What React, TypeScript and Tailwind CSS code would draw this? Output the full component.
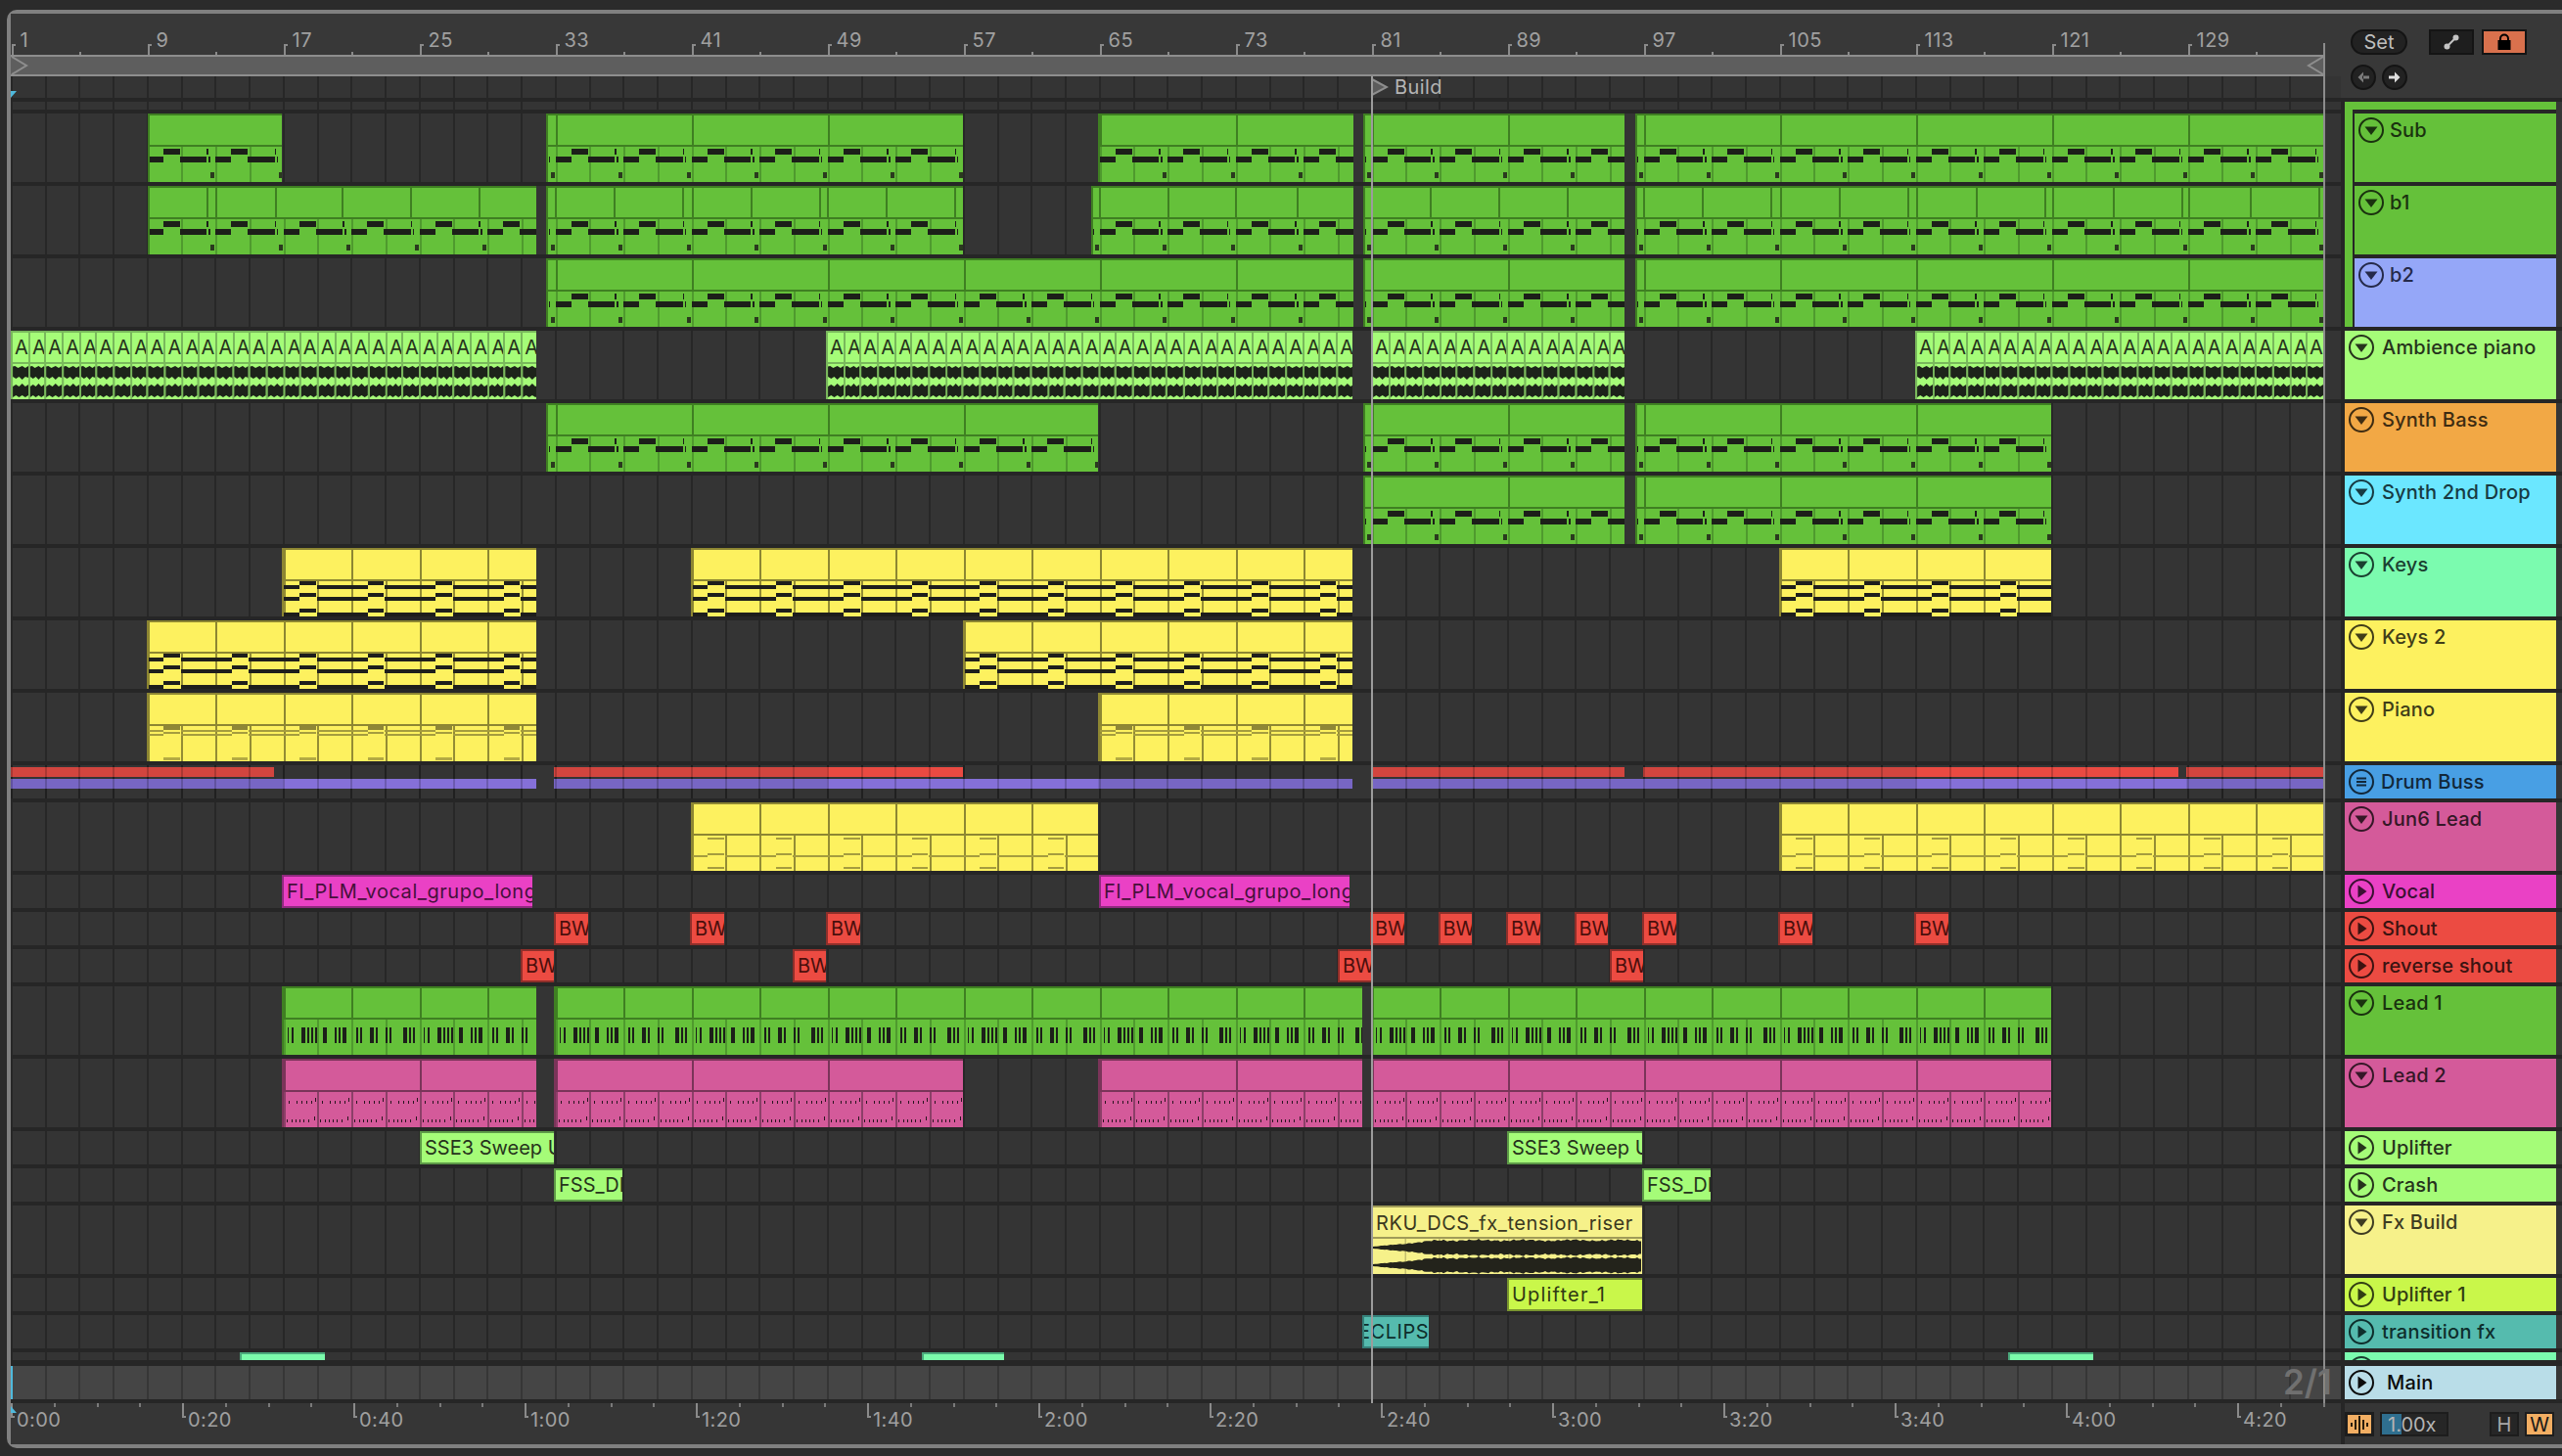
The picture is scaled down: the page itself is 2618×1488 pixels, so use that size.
import type { ReactNode } from "react";

// timeline maths, in page pixels
const BAR = 17.375;
const ORIGIN = 11;
const START = 11.6;
const barX = (bar: number) => START + (bar - 1) * BAR;

type Seg = [number, number, number, number, string?]; // from, to, y, height, colour

const BASS: Seg[] = [
  [0, 16, 44, 6], [16, 33, 36, 6], [33, 60.5, 44, 6], [60.5, 62, 36, 6], [62.5, 64, 44, 6], [64.5, 68.5, 60, 6, "#2a3a1e"],
];
const KEYS: Seg[] = [
  [0, 16.5, 38, 4], [34, 69.5, 38, 4], [16.5, 33, 34, 4],
  [0, 16.5, 50, 4], [34, 69.5, 50, 4], [16.5, 33, 46, 4],
  [0, 16.5, 66, 4], [34, 69.5, 66, 4], [16.5, 33, 62, 4],
];
const PIANO: Seg[] = [
  [16.5, 33, 34, 4, "#8f8736"], [0, 16.5, 38, 2, "#a59c3e"], [34, 69.5, 38, 2, "#a59c3e"], [16.5, 33, 40, 2, "#a59c3e"],
  [0, 16.5, 42, 2, "#a59c3e"], [34, 69.5, 42, 2, "#a59c3e"], [16.5, 33, 66, 3, "#b3aa42"],
];
const JUN: Seg[] = [
  [16.5, 33, 36, 2, "#a59c3e"], [0, 16.5, 54, 2, "#a59c3e"], [34, 69.5, 54, 2, "#a59c3e"], [16.5, 33, 52, 2, "#a59c3e"], [16.5, 33, 66, 2, "#a59c3e"],
];
const LEAD_BARS: [number, number][] = [
  [4, 1.5], [8, 2], [18, 4], [24, 2], [28, 2], [32, 2], [40, 4], [52, 2], [56, 2], [60, 4],
  [74, 2], [78, 2], [88, 4], [94, 2], [104, 2], [108, 2], [122, 4], [128, 2], [132, 2],
];
const LEAD: Seg[] = LEAD_BARS.map(([x, w]) => [x, x + w, 42, 16]);
const PERIODS = { bass: 69.5, keys: 69.5, piano: 69.5, jun: 69.5, lead: 139, dots: 34.75 };
const DOTS: Seg[] = [
  [5, 6, 43, 3], [13, 14, 43, 3], [18, 19, 43, 3], [23, 24, 43, 3], [28, 29, 43, 3], [32, 33, 40, 4],
  [3, 4, 62, 3], [8, 9, 62, 3], [12, 13, 62, 3], [16, 17, 62, 3], [20, 21, 62, 3], [25, 26, 62, 3], [31, 32, 59, 4],
];
const NOTES = { bass: BASS, keys: KEYS, piano: PIANO, jun: JUN, lead: LEAD, dots: DOTS };

const THEMES = {
  green: { fill: "bg-[#65c13a]", line: "#3f7f22", tint: "#4f9a2e", note: "#1c1f19" },
  yellow: { fill: "bg-[#fdf15f]", line: "#8d8632", tint: "#948c34", note: "#1e1e1c" },
  pink: { fill: "bg-[#d45a9a]", line: "#7a3459", tint: "#8c3f68", note: "#2a1520" },
};

type Kind = keyof typeof NOTES;
type Theme = keyof typeof THEMES;
type Span = [number, number, number[]?];

function MidiClip({ span, kind, theme, period }: { span: Span; kind: Kind; theme: Theme; period: number }) {
  const [x, end, custom] = span;
  const w = end - x;
  const t = THEMES[theme];
  const marks: number[] = custom ? [...custom] : [];
  if (!custom) for (let m = START; m < end; m += period) if (m > x) marks.push(m);
  const lines: number[] = [];
  for (let m = START; m < end; m += 34.75) if (m > x) lines.push(m);
  const step = PERIODS[kind];
  const rects: ReactNode[] = [];
  for (let base = START + Math.floor((x - START) / step) * step - step; base < end; base += step) {
    NOTES[kind].forEach((s, i) => {
      rects.push(<rect key={`${base}-${i}`} x={base + s[0]} y={s[2]} width={s[1] - s[0]} height={s[3]} fill={s[4] ?? t.note} />);
    });
  }
  return (
    <div className={`absolute top-0 h-full ${t.fill}`} style={{ left: x - ORIGIN, width: w }}>
      <svg className="block" width={w} height={70} viewBox={`${x} 0 ${w} 70`} shapeRendering="crispEdges">
        {lines.map((m) => <rect key={m} x={m} y={34} width={2} height={36} fill={t.tint} />)}
        {rects}
        {marks.map((m) => <rect key={m} x={m} y={0} width={2} height={34} fill={t.line} />)}
        <rect x={x} y={0} width={w} height={2} fill={t.line} />
        <rect x={x} y={32} width={w} height={2} fill={t.line} />
        <rect x={x} y={0} width={2} height={70} fill={t.line} />
      </svg>
    </div>
  );
}

function AmbienceClip({ x, end }: { x: number; end: number }) {
  const cells: { at: number; w: number }[] = [];
  for (let at = x, i = 0; at < end; i++) {
    const w = i % 3 === 1 ? 16.125 : 18;
    cells.push({ at, w });
    at += w;
  }
  return (
    <div className="absolute top-0 h-full overflow-hidden bg-[#a5fc78]" style={{ left: x - ORIGIN, width: end - x }}>
      <div className="flex h-[32px] border-t-2 border-[#79b85c]">
        {cells.map((c) => (
          <div key={c.at} className="flex shrink-0 items-center overflow-hidden border-l-2 border-[#79b85c] pl-[2px] text-[20px] leading-none text-[#26331c]" style={{ width: c.w }}>
            A
          </div>
        ))}
      </div>
      <svg className="absolute left-0 top-0" width={end - x} height={70} viewBox={`${x} 0 ${end - x} 70`}>
        <rect x={x} y={32} width={end - x} height={2} fill="#79b85c" />
        {cells.map((c) => (
          <g key={c.at} transform={`translate(${c.at} 0) scale(${c.w / 17} 1)`}>
            <path d="M0 37L4 36L7 38L11 36L14 38L17 36L17 48L14 47L11 50L8 47L5 49L2 47L0 49Z" fill="#1d231a" />
            <path d="M0 55L2 57L5 55L8 57L11 54L14 57L17 55L17 66L14 68L11 66L8 68L5 66L2 68L0 66Z" fill="#1d231a" />
            <rect x={0} y={32} width={2} height={38} fill="#79b85c" />
          </g>
        ))}
      </svg>
    </div>
  );
}

function LabelClip({ x, end, text, cls }: { x: number; end: number; text: string; cls: string }) {
  return (
    <div className={`absolute top-0 flex h-full items-center overflow-hidden whitespace-nowrap border-y-2 border-l-2 pl-[3px] text-[20px] leading-none ${cls}`} style={{ left: x - ORIGIN, width: end - x }}>
      {text}
    </div>
  );
}

function FxClip() {
  const x = 1401;
  const w = 277;
  const up: string[] = [];
  const down: string[] = [];
  for (let i = 0; i <= w; i += 2) {
    const grow = Math.min(1, 0.1 + i / 78);
    const noise = Math.sin(i * 0.7) * 0.6 + Math.sin(i * 1.9) * 0.4 + Math.sin(i * 0.13) * 0.5;
    const a = 7.4 * grow + noise * grow;
    up.push(`${x + i} ${(43 - a).toFixed(1)}`);
    down.unshift(`${x + i} ${(43 + a).toFixed(1)}`);
  }
  const wave = `M${up.join("L")}L${down.join("L")}Z`;
  return (
    <div className="absolute top-0 h-full bg-[#f6f18a]" style={{ left: x - ORIGIN, width: w }}>
      <div className="flex h-[33px] items-center whitespace-nowrap border-t-2 border-[#a09b58] pl-[5px] text-[20px] leading-none tracking-[0.55px] text-[#3a3820]">
        RKU_DCS_fx_tension_riser
      </div>
      <svg className="absolute left-0 top-0" width={w} height={70} viewBox={`${x} 0 ${w} 70`}>
        <rect x={x} y={32} width={w} height={2} fill="#a09b58" />
        {[1435.5, 1470.2, 1541, 1610, 1645].map((m) => <rect key={m} x={m} y={34} width={1.5} height={36} fill="#c4bf6e" />)}
        <path d={wave} fill="#23231b" />
        <path d={wave} transform="translate(0 18)" fill="#23231b" />
      </svg>
    </div>
  );
}

const Grid = "bg-[#343434] bg-[repeating-linear-gradient(90deg,#272727_0,#272727_2px,transparent_2px,transparent_34.75px)]";

function Row({ h, children }: { h: string; children?: ReactNode }) {
  return <div className={`relative overflow-hidden ${h} ${Grid}`}>{children}</div>;
}

function Midi({ spans, kind, theme, period = 139 }: { spans: Span[]; kind: Kind; theme: Theme; period?: number }) {
  return (
    <Row h="h-[70px]">
      {spans.map((s) => <MidiClip key={s[0]} span={s} kind={kind} theme={theme} period={period} />)}
    </Row>
  );
}

const VOCAL = "border-[#8f2a7e] bg-[#ea41c5] text-[#46103b] tracking-[0.55px]";
const SHOUT = "border-[#8f2f2a] bg-[#ec4b42] text-[#4a0f0c]";
const SWEEP = "border-[#5d9a47] bg-[#a5fc78] text-[#26331c]";
const LIME = "border-[#7b9630] bg-[#c9f74a] text-[#2f3814] tracking-[1.2px]";

function DrumBuss() {
  const seg = "absolute";
  return (
    <Row h="h-[34px]">
      {[[11, 280, "bg-[#d2453f]"], [566, 845, "bg-[#d2453f]"], [845, 984, "bg-[#ea4a42]"], [1401, 1660, "bg-[#d2453f]"], [1679, 1957, "bg-[#d2453f]"], [1957, 2226, "bg-[#ea4a42]"], [2234, 2374, "bg-[#d2453f]"]].map(([a, b, c]) => (
        <div key={a as number} className={`${seg} top-[2px] h-[10px] ${c}`} style={{ left: (a as number) - ORIGIN, width: (b as number) - (a as number) }} />
      ))}
      {[[11, 289, "bg-[#7766c4]"], [289, 548, "bg-[#8570d8]"], [566, 845, "bg-[#7766c4]"], [845, 1122, "bg-[#8570d8]"], [1122, 1382, "bg-[#7766c4]"], [1401, 1957, "bg-[#7766c4]"], [1957, 2234, "bg-[#8570d8]"], [2234, 2374, "bg-[#7766c4]"]].map(([a, b, c]) => (
        <div key={a as number} className={`${seg} top-[14px] h-[10px] ${c}`} style={{ left: (a as number) - ORIGIN, width: (b as number) - (a as number) }} />
      ))}
      <div className="absolute inset-0 bg-[repeating-linear-gradient(90deg,#00000030_0,#00000030_2px,transparent_2px,transparent_34.75px)]" />
    </Row>
  );
}

function Arrangement() {
  const b1a = [211, 220, 281, 349, 419, 489];
  const b1b = [567, 627, 697, 707, 767, 837, 845, 905, 975];
  const b1c = [1123, 1193, 1262, 1325];
  const b1d = [1401, 1461, 1531, 1601];
  const b1e = [1679, 1739, 1809, 1819, 1879, 1949, 1958, 2019, 2089, 2097, 2159, 2229, 2236, 2299, 2369];
  const shout = [33, 41, 49, 81, 85, 89, 93, 97, 105, 113];
  const reverse = [532, 810, 1367, 1645];
  const bars: number[] = [];
  for (let b = 1; b <= 129; b += 8) bars.push(b);
  return (
    <div className="flex w-[2381px] shrink-0 flex-col gap-[4px]">
      <div className="flex h-[86px] flex-col bg-[#383838]">
        <div className="relative h-[42px] text-[20px] leading-none tracking-[0.4px] text-[#a0a0a0]">
          {bars.map((b) => (
            <div key={b} className="absolute bottom-0" style={{ left: barX(b) - ORIGIN }}>
              <div className="h-[11px] w-[4px] border-l-2 border-t-2 border-[#8a8a8a]" />
              <span className="absolute bottom-[5px] left-[9px]">{b}</span>
              <div className="absolute bottom-0 left-[69.5px] h-[3px] w-[2px] bg-[#8a8a8a]" />
            </div>
          ))}
        </div>
        <div className="relative h-[22px] w-[2364px] border-y-2 border-[#8e8e8e] bg-[#5e5e5e]">
          <svg className="absolute left-0 top-0" width="18" height="18" viewBox="0 0 18 18">
            <path d="M1 0L16 9L1 18" fill="none" stroke="#8e8e8e" strokeWidth="2" />
          </svg>
          <svg className="absolute right-0 top-0" width="18" height="18" viewBox="0 0 18 18">
            <path d="M17 0L2 9L17 18" fill="none" stroke="#8e8e8e" strokeWidth="2" />
          </svg>
        </div>
        <div className={`relative h-[22px] ${Grid}`}>
          <svg className="absolute left-[1390px] top-[2px]" width="18" height="18" viewBox="0 0 18 18">
            <path d="M1 1L16 9L1 17Z" fill="#5b5b5b" stroke="#8e8e8e" strokeWidth="2" />
          </svg>
          <span className="absolute left-[1414px] top-0 flex h-full items-center text-[20px] leading-none tracking-[0.4px] text-[#b4b4b4]">Build</span>
          <div className="absolute left-0 top-[15px] h-0 w-0 border-r-[6px] border-t-[7px] border-r-transparent border-t-[#4fb9dc]" />
        </div>
      </div>
      <Row h="h-[8px]" />
      <Midi kind="bass" theme="green" spans={[[151, 288], [558, 984], [1122, 1383], [1393, 1660], [1671, 2374]]} />
      <Midi kind="bass" theme="green" spans={[[151, 548, b1a], [558, 984, b1b], [1115, 1383, b1c], [1393, 1660, b1d], [1671, 2374, b1e]]} />
      <Midi kind="bass" theme="green" spans={[[558, 1383], [1393, 1660], [1671, 2374]]} />
      <Row h="h-[70px]">
        {[[11, 548], [844, 1382], [1401, 1660], [1957, 2374]].map(([x, end]) => <AmbienceClip key={x} x={x} end={end} />)}
      </Row>
      <Midi kind="bass" theme="green" spans={[[558, 1122], [1393, 1660], [1671, 2096]]} />
      <Midi kind="bass" theme="green" spans={[[1393, 1660], [1671, 2096]]} />
      <Midi kind="keys" theme="yellow" period={69.5} spans={[[288, 548], [706, 1382], [1818, 2096]]} />
      <Midi kind="keys" theme="yellow" period={69.5} spans={[[150, 548], [984, 1382]]} />
      <Midi kind="piano" theme="yellow" period={69.5} spans={[[150, 548], [1122, 1382]]} />
      <DrumBuss />
      <Midi kind="jun" theme="yellow" period={69.5} spans={[[706, 1122], [1818, 2374]]} />
      <Row h="h-[34px]">
        <LabelClip x={288} end={544} text="FI_PLM_vocal_grupo_long" cls={VOCAL} />
        <LabelClip x={1123} end={1379} text="FI_PLM_vocal_grupo_long" cls={VOCAL} />
      </Row>
      <Row h="h-[34px]">
        {shout.map((b) => <LabelClip key={b} x={barX(b) - 1.6} end={barX(b) + 33} text="BW" cls={SHOUT} />)}
      </Row>
      <Row h="h-[34px]">
        {reverse.map((x) => <LabelClip key={x} x={x} end={x + 34} text="BW" cls={SHOUT} />)}
      </Row>
      <Midi kind="lead" theme="green" period={69.5} spans={[[288, 548], [566, 1392], [1401, 2096]]} />
      <Midi kind="dots" theme="pink" spans={[[288, 548], [566, 984], [1122, 1392], [1401, 2096]]} />
      <Row h="h-[34px]">
        <LabelClip x={429} end={566} text="SSE3 Sweep Up" cls={SWEEP} />
        <LabelClip x={1540} end={1678} text="SSE3 Sweep Up" cls={SWEEP} />
      </Row>
      <Row h="h-[34px]">
        <LabelClip x={566} end={636} text="FSS_DL" cls={SWEEP} />
        <LabelClip x={1678} end={1748} text="FSS_DL" cls={SWEEP} />
      </Row>
      <Row h="h-[70px]"><FxClip /></Row>
      <Row h="h-[34px]"><LabelClip x={1540} end={1678} text="Uplifter_1" cls={LIME} /></Row>
      <Row h="h-[34px]">
        <div className="absolute top-0 flex h-full items-center overflow-hidden whitespace-nowrap border-y-2 border-l-2 border-[#35807a] bg-[#55bbae] text-[20px] leading-none tracking-[0.55px] text-[#0e2e2c]" style={{ left: 1392 - ORIGIN, width: 68 }}>
          <span className="ml-[-6px]">ECLIPSE</span>
        </div>
      </Row>
      <Row h="h-[8px]">
        {[[245, 332], [942, 1026], [2052, 2139]].map(([x, end]) => (
          <div key={x} className="absolute top-0 h-full border-l-2 border-t-2 border-[#4ba97c] bg-[#7bfbab]" style={{ left: x - ORIGIN, width: end - x }} />
        ))}
      </Row>
      <div className="relative mt-[2px] h-[34px] bg-[#454545] bg-[repeating-linear-gradient(90deg,#363636_0,#363636_2px,transparent_2px,transparent_34.75px)]">
        <div className="absolute left-0 top-0 h-full w-[2px] bg-[#4fb9dc]" />
      </div>
      <TimeRuler />
    </div>
  );
}

function TimeRuler() {
  const labels = ["0:00", "0:20", "0:40", "1:00", "1:20", "1:40", "2:00", "2:20", "2:40", "3:00", "3:20", "3:40", "4:00", "4:20"];
  const minors: number[] = [];
  for (let i = 1; i < 55; i++) if (i % 4) minors.push(i * 43.75);
  return (
    <div className="relative h-[42px] bg-[#363636] text-[20px] leading-none tracking-[0.4px] text-[#a0a0a0]">
      {minors.map((m) => <div key={m} className="absolute top-0 h-[4px] w-[2px] bg-[#7a7a7a]" style={{ left: m }} />)}
      {labels.map((l, i) => (
        <div key={l} className="absolute top-0" style={{ left: i * 175 }}>
          <div className="h-[15px] w-[4px] border-b-2 border-l-2 border-[#8a8a8a]" />
          <span className="absolute left-[6px] top-[7px]">{l}</span>
        </div>
      ))}
      <div className="absolute left-0 top-[3px] h-0 w-0 border-b-[7px] border-r-[6px] border-b-[#4fb9dc] border-r-transparent" />
    </div>
  );
}

type Icon = "down" | "play" | "list";

function TrackButton({ icon, color }: { icon: Icon; color: string }) {
  return (
    <svg className="shrink-0" width="26" height="26" viewBox="0 0 26 26" style={{ color }}>
      <circle cx="13" cy="13" r="12" fill="none" stroke="currentColor" strokeWidth="2" />
      {icon === "down" && <path d="M6.5 9.5H19.5L13 18Z" fill="currentColor" />}
      {icon === "play" && <path d="M9.5 6.5V19.5L18.5 13Z" fill="currentColor" />}
      {icon === "list" && <path d="M8 8.5H18V10.5H8ZM8 12H18V14H8ZM8 15.5H18V17.5H8Z" fill="currentColor" />}
    </svg>
  );
}

type Head = { name: string; bg: string; ink: string; icon: Icon; h: string; gap?: string };

const TOP_HEADS: Head[] = [
  { name: "Ambience piano", bg: "bg-[#a5fc78]", ink: "#26331c", icon: "down", h: "h-[70px]" },
  { name: "Synth Bass", bg: "bg-[#f2a845]", ink: "#3e2c12", icon: "down", h: "h-[70px]" },
  { name: "Synth 2nd Drop", bg: "bg-[#6be7ff]", ink: "#173a42", icon: "down", h: "h-[70px]" },
  { name: "Keys", bg: "bg-[#7bfbaf]", ink: "#1a4030", icon: "down", h: "h-[70px]" },
  { name: "Keys 2", bg: "bg-[#fdf15f]", ink: "#403d18", icon: "down", h: "h-[70px]" },
  { name: "Piano", bg: "bg-[#fdf15f]", ink: "#403d18", icon: "down", h: "h-[70px]" },
  { name: "Drum Buss", bg: "bg-[#489fe4]", ink: "#12283a", icon: "list", h: "h-[34px]", gap: "ml-[7px]" },
  { name: "Jun6 Lead", bg: "bg-[#d45a9a]", ink: "#351727", icon: "down", h: "h-[70px]" },
  { name: "Vocal", bg: "bg-[#ea41c5]", ink: "#3b1032", icon: "play", h: "h-[34px]" },
  { name: "Shout", bg: "bg-[#ec4b42]", ink: "#3b1311", icon: "play", h: "h-[34px]" },
  { name: "reverse shout", bg: "bg-[#ec4b42]", ink: "#3b1311", icon: "play", h: "h-[34px]" },
  { name: "Lead 1", bg: "bg-[#65c13a]", ink: "#1a310f", icon: "down", h: "h-[70px]" },
  { name: "Lead 2", bg: "bg-[#d45a9a]", ink: "#351727", icon: "down", h: "h-[70px]" },
  { name: "Uplifter", bg: "bg-[#a5fc78]", ink: "#26331c", icon: "play", h: "h-[34px]" },
  { name: "Crash", bg: "bg-[#a5fc78]", ink: "#26331c", icon: "play", h: "h-[34px]" },
  { name: "Fx Build", bg: "bg-[#f6f18a]", ink: "#3e3c22", icon: "down", h: "h-[70px]" },
  { name: "Uplifter 1", bg: "bg-[#c9f74a]", ink: "#323e13", icon: "play", h: "h-[34px]" },
  { name: "transition fx", bg: "bg-[#55bbae]", ink: "#0e2e2c", icon: "play", h: "h-[34px]" },
];

const GROUPED: Head[] = [
  { name: "Sub", bg: "bg-[#65c13a]", ink: "#1a310f", icon: "down", h: "h-[70px]", gap: "ml-[6px]" },
  { name: "b1", bg: "bg-[#65c13a]", ink: "#1a310f", icon: "down", h: "h-[70px]", gap: "ml-[6px]" },
  { name: "b2", bg: "bg-[#95a7f8]", ink: "#252a4a", icon: "down", h: "h-[70px]", gap: "ml-[6px]" },
];

function TrackHead({ head }: { head: Head }) {
  return (
    <div className={`${head.h} ${head.bg}`}>
      <div className="flex h-[34px] items-center pl-[4px]">
        <TrackButton icon={head.icon} color={head.ink} />
        <span className={`${head.gap ?? "ml-[8px]"} whitespace-nowrap text-[20px] font-medium leading-none tracking-[0.2px]`} style={{ color: head.ink }}>
          {head.name}
        </span>
      </div>
    </div>
  );
}

function TopControls() {
  return (
    <div className="flex h-[86px] flex-col gap-[10px] bg-[#383838] pl-[10px] pt-[16px]">
      <div className="flex h-[26px] items-center">
        <div className="flex h-[26px] w-[58px] items-center justify-center rounded-full border-2 border-[#141414] bg-[#222222] text-[20px] leading-none text-[#bdbdbd]">Set</div>
        <div className="ml-[22px] flex h-[26px] w-[46px] items-center justify-center border-2 border-[#141414] bg-[#1e1e1e]">
          <svg width="16" height="16" viewBox="0 0 16 16">
            <path d="M4 12L12 4" stroke="#c4c4c4" strokeWidth="2" />
            <circle cx="3.5" cy="12.5" r="3" fill="#c4c4c4" />
            <circle cx="12.5" cy="3.5" r="3" fill="#c4c4c4" />
          </svg>
        </div>
        <div className="ml-[8px] flex h-[26px] w-[46px] items-center justify-center border-2 border-[#141414] bg-[#d9714d]">
          <svg width="16" height="18" viewBox="0 0 16 18">
            <path d="M4 8V5.5a4 4 0 0 1 8 0V8" fill="none" stroke="#000" strokeWidth="2" />
            <rect x="1.5" y="7" width="13" height="10" fill="#000" />
          </svg>
        </div>
      </div>
      <div className="flex gap-[6px]">
        <div className="flex h-[26px] w-[26px] items-center justify-center rounded-full border-2 border-[#141414] bg-[#222222]">
          <svg width="14" height="14" viewBox="0 0 14 14"><path d="M7 1.5L1.5 7L7 12.5ZM6 5.5H13V8.5H6Z" fill="#7b7b7b" /></svg>
        </div>
        <div className="flex h-[26px] w-[26px] items-center justify-center rounded-full border-2 border-[#141414] bg-[#222222]">
          <svg width="14" height="14" viewBox="0 0 14 14"><path d="M7 1.5L12.5 7L7 12.5ZM1 5.5H8V8.5H1Z" fill="#dedede" /></svg>
        </div>
      </div>
    </div>
  );
}

function BottomControls() {
  return (
    <div className="flex h-[42px] items-start bg-[#363636] pt-[9px]">
      <div className="flex h-[25px] w-[30px] items-center justify-center border-[3px] border-[#1d1d1d] bg-[#f2ae63]">
        <svg width="20" height="18" viewBox="0 0 20 18">
          <path d="M1 7H3V11H1ZM5 4H7V14H5ZM9 0H11V18H9ZM13 4H15V14H13ZM17 7H19V11H17Z" fill="#2a1d0c" />
        </svg>
      </div>
      <div className="relative ml-[6px] flex h-[25px] w-[70px] items-center border-2 border-[#1d1d1d] bg-[#262626] pl-[6px] text-[20px] leading-none text-[#b4b4b4]">
        <div className="absolute bottom-0 left-0 top-0 w-[20px] bg-[#2f6f8f]" />
        <span className="relative">1.00x</span>
      </div>
      <div className="ml-[42px] flex h-[25px] w-[30px] items-center justify-center border-2 border-[#1d1d1d] bg-[#262626] text-[20px] leading-none text-[#a8a8a8]">H</div>
      <div className="ml-[6px] flex h-[25px] w-[30px] items-center justify-center border-2 border-[#1d1d1d] bg-[#f2ae63] text-[20px] leading-none text-[#161616]">W</div>
    </div>
  );
}

function Headers() {
  const Wrap = ({ children }: { children: ReactNode }) => <div className="bg-[#363636]"><div className="w-[216px]">{children}</div></div>;
  return (
    <div className="flex w-[226px] shrink-0 flex-col gap-[4px] pl-[4px]">
      <div className="ml-[-4px] w-[230px]"><TopControls /></div>
      <Wrap>
        <div className="bg-[#65c13a] pt-[8px]">
          <div className="ml-[8px] flex flex-col gap-[4px] bg-[#262626] pl-[2px] pt-[4px]">
            {GROUPED.map((h) => <TrackHead key={h.name} head={h} />)}
          </div>
        </div>
      </Wrap>
      {TOP_HEADS.map((h) => <Wrap key={h.name}><TrackHead head={h} /></Wrap>)}
      <Wrap>
        <div className="h-[8px] overflow-hidden bg-[#7bfbaf]">
          <div className="ml-[4px] mt-[4px]"><TrackButton icon="play" color="#1a4030" /></div>
        </div>
      </Wrap>
      <div className="mt-[2px]">
        <Wrap>
          <div className="flex h-[34px] items-center bg-[#b9dde8] pl-[4px]">
            <TrackButton icon="play" color="#0c0c0c" />
            <span className="ml-[13px] text-[20px] font-medium leading-none tracking-[0.2px] text-[#0c0c0c]">Main</span>
          </div>
        </Wrap>
      </div>
      <BottomControls />
    </div>
  );
}

export default function App() {
  return (
    <div className="h-[1488px] w-[2618px] overflow-hidden bg-[#2b2b2b] pl-[7px] pt-[10px] font-['Inter','Liberation_Sans',sans-serif]">
      <div className="relative flex h-[1470px] w-[2620px] rounded-l-[10px] border-y-4 border-l-4 border-[#808080] bg-[#262626]">
        <Arrangement />
        <Headers />
        <div className="absolute left-[1390px] top-[64px] h-[1356px] w-[2px] bg-[#9c9c9c]" />
        <div className="absolute left-[2363px] top-[30px] h-[1390px] w-[2px] bg-[#8c8c8c]" />
        <span className="absolute left-[2322px] top-[1381px] text-[35px] font-semibold leading-none text-[#707070]">2/1</span>
      </div>
    </div>
  );
}
